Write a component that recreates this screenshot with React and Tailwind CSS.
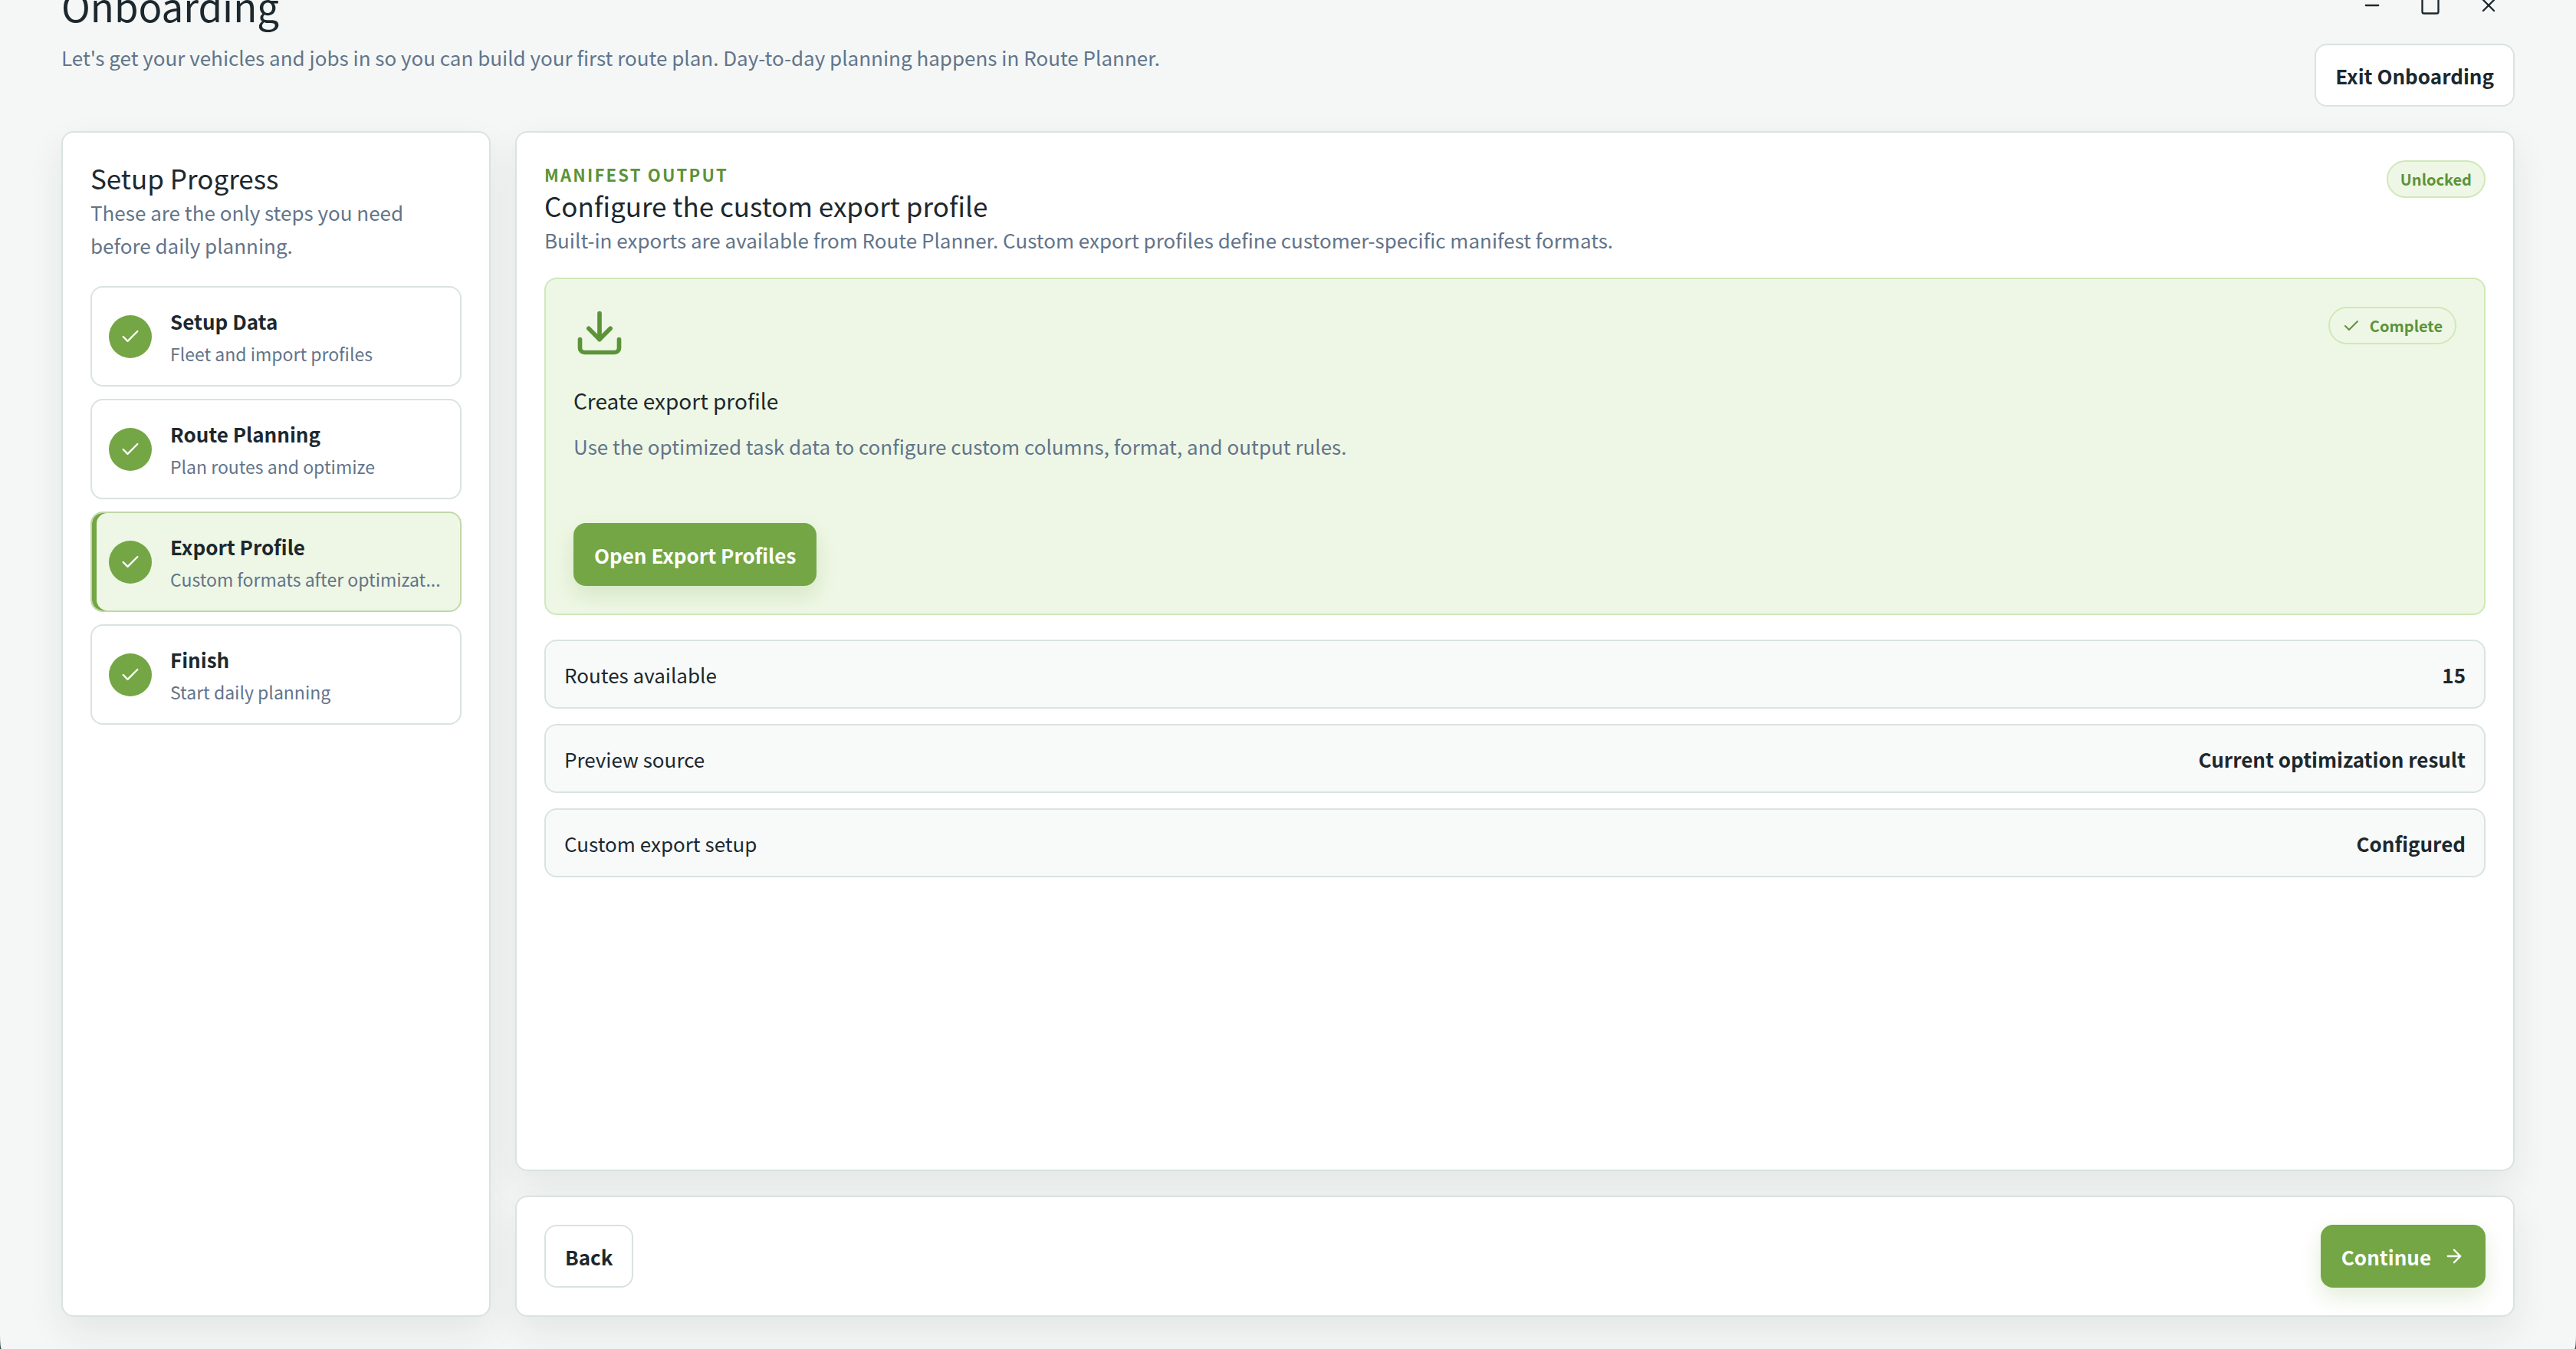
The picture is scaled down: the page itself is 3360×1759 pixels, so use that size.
import { useState } from 'react';
import { ArrowRight, Check, Download, Minus, Square, X } from 'lucide-react';

const steps = [
  { id: 'setup', title: 'Setup Data', description: 'Fleet and import profiles' },
  { id: 'routes', title: 'Route Planning', description: 'Plan routes and optimize' },
  { id: 'export', title: 'Export Profile', description: 'Custom formats after optimizat...' },
  { id: 'finish', title: 'Finish', description: 'Start daily planning' },
];

const summary = [
  { label: 'Routes available', value: '15' },
  { label: 'Preview source', value: 'Current optimization result' },
  { label: 'Custom export setup', value: 'Configured' },
];

const Card = ({ as: Tag = 'section', className = '', children }) => (
  <Tag className={`bg-white border-2 border-[#d9e3e0] rounded-2xl p-9 shadow-[0_20px_48px_rgba(28,40,38,0.08)] ${className}`}>
    {children}
  </Tag>
);

const Badge = ({ children }) => (
  <span className="flex items-center gap-3 h-[49px] px-4 border-2 border-[#d0e8b9] bg-[#eef7e5] rounded-full text-xl font-semibold text-[#5c9339] shrink-0">
    {children}
  </span>
);

const PrimaryButton = ({ children }) => (
  <button
    type="button"
    className="flex items-center gap-4 h-[82px] px-[27px] rounded-2xl bg-[#74a645] text-white font-semibold shadow-[0_12px_28px_rgba(115,166,68,0.2)] hover:bg-[#67963c] transition-colors"
  >
    {children}
  </button>
);

const SecondaryButton = ({ children }) => (
  <button
    type="button"
    className="h-[82px] px-[25px] rounded-2xl border-2 border-[#d9e3e0] bg-white font-semibold hover:bg-[#f8faf9] transition-colors"
  >
    {children}
  </button>
);

const StepItem = ({ step, active, onSelect }) => (
  <button
    type="button"
    onClick={onSelect}
    aria-current={active ? 'step' : undefined}
    className={`flex items-center gap-6 w-full min-h-[131px] px-[22px] rounded-2xl border-2 text-left ${active ? 'border-[#c0d8a8] bg-[#eef7e5] shadow-[inset_6px_0_0_#74a645]' : 'border-[#d9e3e0] bg-white'}`}
  >
    <span className="flex items-center justify-center w-14 h-14 rounded-full bg-[#74a645] text-white shrink-0">
      <Check className="w-7 h-7" />
    </span>
    <span className="min-w-0 flex-1">
      <span className="block leading-[44px] font-semibold">{step.title}</span>
      <span className="block text-[23px] leading-[40px] text-[#62748a] whitespace-nowrap">{step.description}</span>
    </span>
  </button>
);

const App = () => {
  const [current, setCurrent] = useState('export');

  return (
    <div className="bg-[#2f4a48] font-['Noto_Sans_CJK_SC',sans-serif] text-[26px] leading-[43px] text-[#1c282e]">
      <div className="flex flex-col min-h-screen px-20 pb-[42px] bg-[#f4f7f6] overflow-hidden [border-bottom-left-radius:2px_18px] [border-bottom-right-radius:2px_18px]">
        <header className="flex items-start justify-between -mt-[27px] mb-8">
          <div>
            <h1 className="text-[51px] leading-[68px] mb-3">Onboarding</h1>
            <p className="text-[#62748a]">
              Let's get your vehicles and jobs in so you can build your first route plan. Day-to-day planning happens in Route Planner.
            </p>
          </div>
          <div className="flex flex-col items-end gap-4">
            <div className="flex gap-2">
              <button type="button" aria-label="Minimize" className="flex items-center justify-center w-[68px] h-[68px]">
                <Minus className="w-7 h-7" />
              </button>
              <button type="button" aria-label="Maximize" className="flex items-center justify-center w-[68px] h-[68px]">
                <Square className="w-7 h-7" />
              </button>
              <button type="button" aria-label="Close" className="flex items-center justify-center w-[68px] h-[68px]">
                <X className="w-7 h-7" />
              </button>
            </div>
            <SecondaryButton>Exit Onboarding</SecondaryButton>
          </div>
        </header>

        <div className="flex flex-1 gap-8">
          <Card as="aside" className="w-[560px] shrink-0">
            <h2 className="text-[35px] leading-[46px]">Setup Progress</h2>
            <p className="text-[#62748a]">These are the only steps you need before daily planning.</p>
            <nav className="flex flex-col gap-4 mt-8">
              {steps.map((step) => (
                <StepItem
                  key={step.id}
                  step={step}
                  active={step.id === current}
                  onSelect={() => setCurrent(step.id)}
                />
              ))}
            </nav>
          </Card>

          <main className="flex flex-col flex-1 min-w-0 gap-8">
            <Card className="flex-1">
              <div className="flex items-start justify-between">
                <div>
                  <p className="text-[22px] leading-9 font-semibold tracking-widest uppercase text-[#5c9339]">Manifest output</p>
                  <h2 className="text-[35px] leading-[46px]">Configure the custom export profile</h2>
                  <p className="text-[#62748a]">
                    Built-in exports are available from Route Planner. Custom export profiles define customer-specific manifest formats.
                  </p>
                </div>
                <Badge>Unlocked</Badge>
              </div>

              <div className="flex flex-col items-start min-h-[440px] mt-7 p-9 border-2 border-[#d0e8b9] bg-[#eef7e5] rounded-2xl">
                <div className="flex items-start justify-between w-full">
                  <Download className="w-[68px] h-[68px] text-[#5c9339]" />
                  <Badge>
                    <Check className="w-6 h-6" />
                    Complete
                  </Badge>
                </div>
                <h3 className="mt-8 text-[28px] leading-[44px]">Create export profile</h3>
                <p className="mt-4 mb-auto text-[#62748a]">
                  Use the optimized task data to configure custom columns, format, and output rules.
                </p>
                <PrimaryButton>Open Export Profiles</PrimaryButton>
              </div>

              <dl className="flex flex-col gap-5 mt-8">
                {summary.map((row) => (
                  <div key={row.label} className="flex items-center justify-between h-[90px] px-6 border-2 border-[#d9e3e0] bg-[#f8faf9] rounded-2xl">
                    <dt>{row.label}</dt>
                    <dd className="font-semibold">{row.value}</dd>
                  </div>
                ))}
              </dl>
            </Card>

            <Card as="footer" className="flex items-center justify-between">
              <SecondaryButton>Back</SecondaryButton>
              <PrimaryButton>
                Continue
                <ArrowRight className="w-7 h-7" />
              </PrimaryButton>
            </Card>
          </main>
        </div>
      </div>
    </div>
  );
};

export default App;
